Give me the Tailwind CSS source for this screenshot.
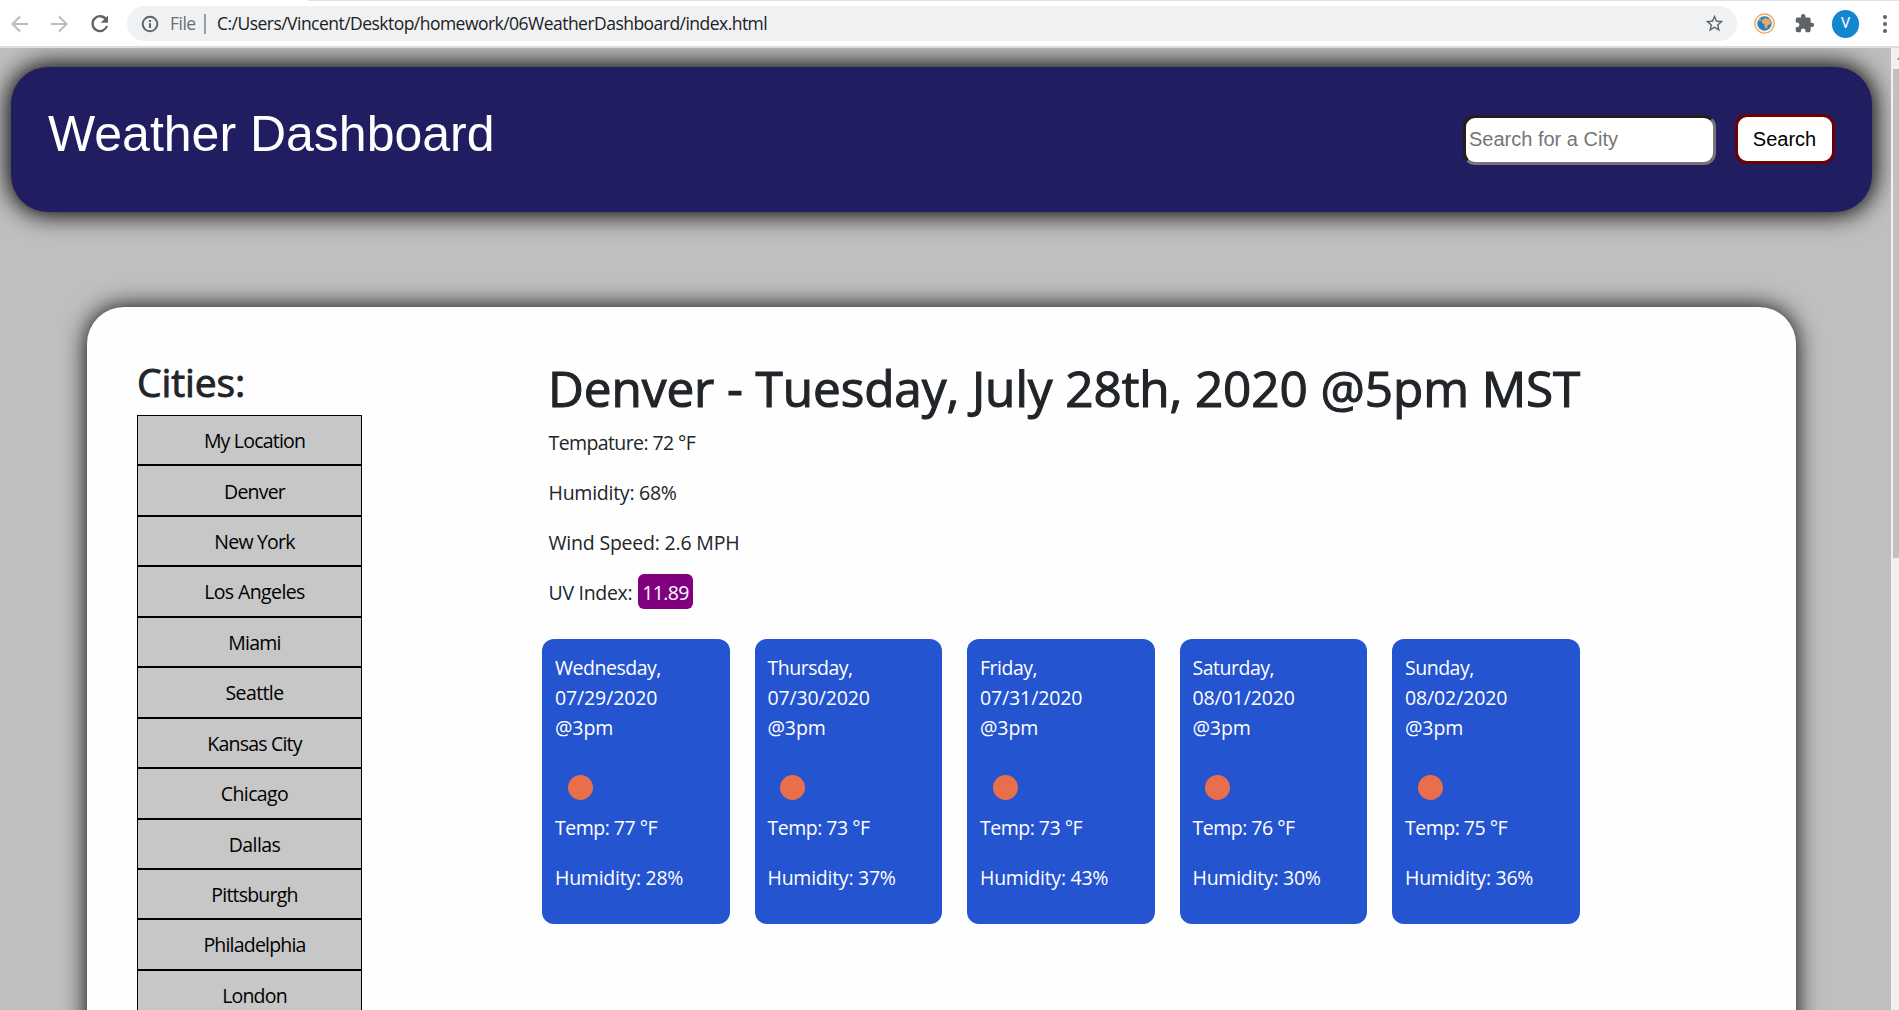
<!DOCTYPE html>
<html lang="en">
<head>
<meta charset="utf-8">
<title>Weather Dashboard</title>
<script src="https://cdn.jsdelivr.net/npm/@tailwindcss/browser@4"></script>
</head>
<body class="h-[1010px] overflow-hidden bg-[#bfbfbf] font-['Open_Sans',sans-serif] text-[#212529]">
<div class="flex h-[1010px] flex-col">
  <!-- browser toolbar -->
  <div class="flex h-12 shrink-0 items-start border-b-2 border-[#dcdde1] bg-white">
    <div class="flex h-[47px] w-[127px] shrink-0 items-center pl-[11px]">
      <svg class="h-[18px] w-[18px]" viewBox="0 0 18 18" fill="none" stroke="#bbbcbe" stroke-width="2"><path d="M17 9H2M9 1.500L1.500 9L9 16.500"/></svg>
      <svg class="ml-[21px] h-[18px] w-[18px]" viewBox="0 0 18 18" fill="none" stroke="#bbbcbe" stroke-width="2"><path d="M1 9H16M9 1.500L16.500 9L9 16.500"/></svg>
      <svg class="ml-[22px] h-[20px] w-[20px]" viewBox="0 0 20 20" fill="none" stroke="#5f6368" stroke-width="2.300"><path d="M16 5.300A7.400 7.400 0 1 0 17 12"/><path d="M18 1.500V8.800H10.700Z" fill="#5f6368" stroke="none"/></svg>
    </div>
    <div class="mt-[6px] flex h-[35px] w-[1610px] shrink-0 items-center rounded-full bg-[#f0f1f3] pl-[14px] text-[17.5px]">
      <svg class="h-[18px] w-[18px]" viewBox="0 0 18 18" fill="none" stroke="#5f6368" stroke-width="2"><circle cx="9" cy="9" r="7.300"/><path d="M9 8.200V13M9 5V7"/></svg>
      <span class="ml-[11px] w-[25px] text-[#6a6e73] tracking-[-0.5px]">File</span>
      <span class="ml-[9px] h-5 w-[2px] bg-[#9a9da1]"></span>
      <span class="ml-[11px] whitespace-nowrap text-[#202124] tracking-[-0.53px]">C:/Users/Vincent/Desktop/homework/06WeatherDashboard/index.html</span>
      <svg class="ml-auto mr-[12px] h-[21px] w-[21px]" viewBox="0 0 24 24" fill="#5f6368"><path d="M22 9.240l-7.190-.620L12 2 9.190 8.630 2 9.240l5.460 4.730L5.820 21 12 17.270 18.180 21l-1.630-7.030L22 9.240zM12 15.400l-3.760 2.270 1-4.280-3.320-2.880 4.380-.380L12 6.100l1.710 4.040 4.380.380-3.320 2.880 1 4.280L12 15.400z"/></svg>
    </div>
    <div class="flex h-[47px] flex-1 items-center pl-[17px]">
      <svg class="h-[21px] w-[21px] shrink-0" viewBox="0 0 21 21"><circle cx="10.500" cy="10.500" r="9.700" fill="#fdf3e2" stroke="#eaa158" stroke-width="1.300"/><circle cx="10.500" cy="10.500" r="7.200" fill="#2d7fc0"/><path d="M8 7L11 5L16 6.500L17 11L14 12L12.500 16L10.500 14L10.500 11L8 10ZM4 7L7 5.500L6.500 8.500Z" fill="#dfae68"/></svg>
      <svg class="ml-[19px] h-[21px] w-[21px] shrink-0" viewBox="0 0 24 24" fill="#5f6368"><path d="M20.500 11H19V7c0-1.100-.900-2-2-2h-4V3.500a2.500 2.500 0 0 0-5 0V5H4c-1.100 0-2 .900-2 2v3.800h1.500a2.700 2.700 0 0 1 0 5.400H2V20c0 1.100.900 2 2 2h3.800v-1.500a2.700 2.700 0 0 1 5.400 0V22H17c1.100 0 2-.900 2-2v-4h1.500a2.500 2.500 0 0 0 0-5z"/></svg>
      <div class="ml-[17px] flex h-7 w-[27px] shrink-0 items-center justify-center rounded-full bg-[#1287d0] font-[Roboto,sans-serif] text-[15px] text-white">V</div>
      <div class="ml-[24px] flex flex-col gap-[3px]"><i class="h-[4px] w-[4px] rounded-full bg-[#5f6368]"></i><i class="h-[4px] w-[4px] rounded-full bg-[#5f6368]"></i><i class="h-[4px] w-[4px] rounded-full bg-[#5f6368]"></i></div>
    </div>
    <div class="absolute top-0 right-0 left-[308px] h-px bg-[#dfe1e6]"></div>
  </div>

  <div class="flex min-h-0 flex-1">
    <!-- page -->
    <div class="w-[1891px] overflow-hidden pt-[19px] pl-[11px]">
      <header class="flex h-[145px] w-[1861px] items-start rounded-[37px] bg-[#201e60] pr-[37px] pl-[37px] font-['Liberation_Sans',sans-serif] shadow-[0_0_25px_3px_#000]">
        <h1 class="mt-[37px] text-[50px] leading-[60px] text-white">Weather Dashboard</h1>
        <input class="mt-[48px] ml-auto h-[50px] w-[253px] rounded-xl border-3 border-t-[#1f1f1f] border-r-[#767676] border-b-[#767676] border-l-[#1f1f1f] bg-white px-[3px] pb-px text-[20px] placeholder:text-[#757575]" placeholder="Search for a City">
        <button class="mt-[47px] ml-[19px] h-[50px] w-[100px] rounded-xl border-3 border-[#6d0000] bg-white pr-px text-[20px] text-black">Search</button>
      </header>

      <main class="mt-[95px] ml-[76px] flex h-[900px] w-[1709px] rounded-[37px] bg-[#fefefe] pl-[50px] shadow-[0_0_25px_#000]">
        <aside class="w-[225px] shrink-0 pt-[51px]">
          <h2 class="h-[57px] text-[39px] leading-[48px] tracking-[-0.1px] [-webkit-text-stroke:0.9px_#212529]">Cities:</h2>
          <ul class="text-center text-[19.5px] text-black tracking-[-0.8px]">
            <li class="flex h-[50.45px] items-center justify-center border border-black bg-[#c7c7c7] pt-px pl-[10px]">My Location</li>
            <li class="flex h-[50.45px] items-center justify-center border border-black bg-[#c7c7c7] pt-px pl-[10px]">Denver</li>
            <li class="flex h-[50.45px] items-center justify-center border border-black bg-[#c7c7c7] pt-px pl-[10px]">New York</li>
            <li class="flex h-[50.45px] items-center justify-center border border-black bg-[#c7c7c7] pt-px pl-[10px] tracking-[-0.6px]">Los Angeles</li>
            <li class="flex h-[50.45px] items-center justify-center border border-black bg-[#c7c7c7] pt-px pl-[10px]">Miami</li>
            <li class="flex h-[50.45px] items-center justify-center border border-black bg-[#c7c7c7] pt-px pl-[10px] tracking-[-0.6px]">Seattle</li>
            <li class="flex h-[50.45px] items-center justify-center border border-black bg-[#c7c7c7] pt-px pl-[10px]">Kansas City</li>
            <li class="flex h-[50.45px] items-center justify-center border border-black bg-[#c7c7c7] pt-px pl-[10px] tracking-[-0.6px]">Chicago</li>
            <li class="flex h-[50.45px] items-center justify-center border border-black bg-[#c7c7c7] pt-px pl-[10px] tracking-[-0.6px]">Dallas</li>
            <li class="flex h-[50.45px] items-center justify-center border border-black bg-[#c7c7c7] pt-px pl-[10px]">Pittsburgh</li>
            <li class="flex h-[50.45px] items-center justify-center border border-black bg-[#c7c7c7] pt-px pl-[10px]">Philadelphia</li>
            <li class="flex h-[50.45px] items-center justify-center border border-black bg-[#c7c7c7] pt-px pl-[10px]">London</li>
          </ul>
        </aside>
        <section class="ml-[180px] pt-[51px]">
          <h2 class="ml-[6px] h-[70px] text-[49.5px] leading-[60px] whitespace-nowrap tracking-[-0.1px] [-webkit-text-stroke:1.1px_#212529]">Denver - Tuesday, July 28th, 2020 @5pm MST</h2>
          <div class="ml-[6.500px] flex h-[211px] flex-col gap-5 text-[19.5px] leading-[30px]">
            <p class="tracking-[-0.6px]">Tempature: 72 °F</p>
            <p class="tracking-[-0.25px]">Humidity: 68%</p>
            <p class="tracking-[-0.2px]">Wind Speed: 2.6 MPH</p>
            <p class="flex tracking-[-0.3px]"><span class="w-[89.500px]">UV Index:</span><span class="-mt-[4px] h-[35px] w-[55px] rounded-md bg-[#800080] pt-[4px] text-center text-white tracking-[-0.6px]">11.89</span></p>
          </div>
          <div class="flex gap-[25px] text-[19.5px] leading-[30px] text-white">
            <article class="h-[285px] w-[187.500px] rounded-[12px] bg-[#2554d0] px-[13px] pt-[14px]"><p class="tracking-[-0.48px]">Wednesday,</p><p class="tracking-[-0.12px]">07/29/2020<br>@3pm</p><div class="mt-[32px] ml-[12.500px] h-[25px] w-[25px] rounded-full bg-[#e96f4c]"></div><p class="mt-[13px] tracking-[-0.5px]">Temp: 77 °F</p><p class="mt-5 tracking-[-0.25px]">Humidity: 28%</p></article>
            <article class="h-[285px] w-[187.500px] rounded-[12px] bg-[#2554d0] px-[13px] pt-[14px]"><p class="tracking-[-0.48px]">Thursday,</p><p class="tracking-[-0.12px]">07/30/2020<br>@3pm</p><div class="mt-[32px] ml-[12px] h-[25px] w-[25px] rounded-full bg-[#e96f4c]"></div><p class="mt-[13px] tracking-[-0.5px]">Temp: 73 °F</p><p class="mt-5 tracking-[-0.25px]">Humidity: 37%</p></article>
            <article class="h-[285px] w-[187.500px] rounded-[12px] bg-[#2554d0] px-[13px] pt-[14px]"><p class="tracking-[-0.48px]">Friday,</p><p class="tracking-[-0.12px]">07/31/2020<br>@3pm</p><div class="mt-[32px] ml-[12.500px] h-[25px] w-[25px] rounded-full bg-[#e96f4c]"></div><p class="mt-[13px] tracking-[-0.5px]">Temp: 73 °F</p><p class="mt-5 tracking-[-0.25px]">Humidity: 43%</p></article>
            <article class="h-[285px] w-[187.500px] rounded-[12px] bg-[#2554d0] px-[13px] pt-[14px]"><p class="tracking-[-0.48px]">Saturday,</p><p class="tracking-[-0.12px]">08/01/2020<br>@3pm</p><div class="mt-[32px] ml-[12px] h-[25px] w-[25px] rounded-full bg-[#e96f4c]"></div><p class="mt-[13px] tracking-[-0.5px]">Temp: 76 °F</p><p class="mt-5 tracking-[-0.25px]">Humidity: 30%</p></article>
            <article class="h-[285px] w-[187.500px] rounded-[12px] bg-[#2554d0] px-[13px] pt-[14px]"><p class="tracking-[-0.48px]">Sunday,</p><p class="tracking-[-0.12px]">08/02/2020<br>@3pm</p><div class="mt-[32px] ml-[12.500px] h-[25px] w-[25px] rounded-full bg-[#e96f4c]"></div><p class="mt-[13px] tracking-[-0.5px]">Temp: 75 °F</p><p class="mt-5 tracking-[-0.25px]">Humidity: 36%</p></article>
          </div>
        </section>
      </main>
    </div>
    <!-- scrollbar -->
    <div class="w-2 bg-[#f1f1f1] pl-[2px]">
      <div class="flex h-[21px] items-center justify-end"><svg class="h-[3px] w-[2px]" viewBox="0 0 2 3"><path d="M0 3L2 0V3Z" fill="#888888"/></svg></div>
      <div class="h-[489px] bg-[#c1c1c1]"></div>
    </div>
  </div>
</div>
</body>
</html>
